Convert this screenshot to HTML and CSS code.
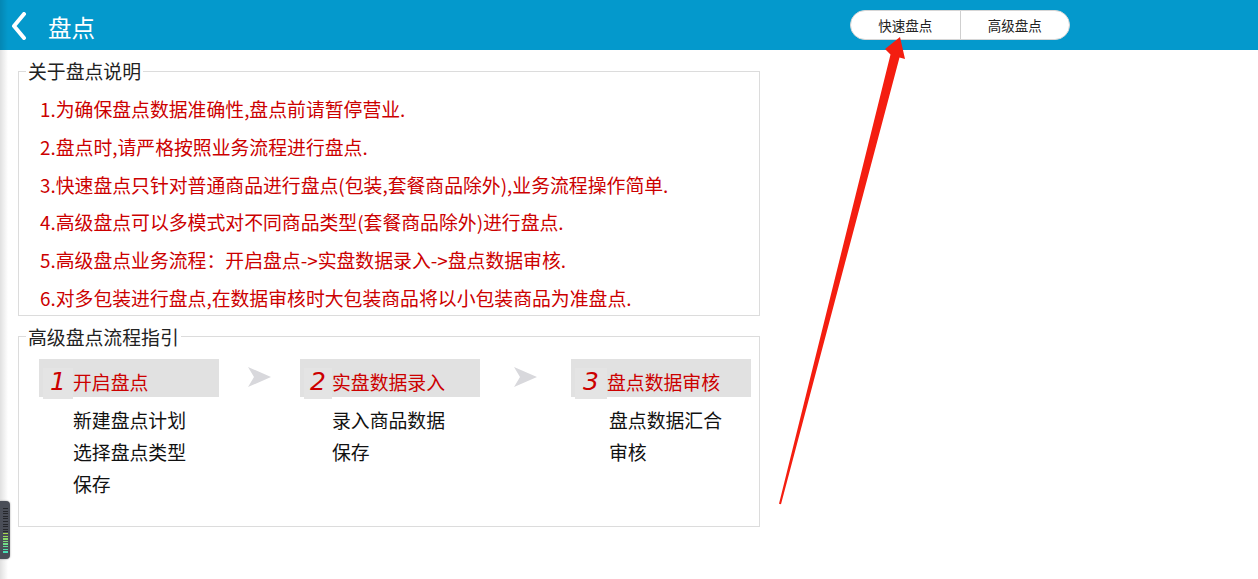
FILE: index.html
```html
<!DOCTYPE html>
<html lang="zh-CN">
<head>
<meta charset="utf-8">
<title>盘点</title>
<link rel="stylesheet" href="styles.css">
</head>
<body>
<header class="topbar">
  <svg class="back" viewBox="0 0 18 28" width="18" height="28"><path d="M14 2 L4 14 L14 26" fill="none" stroke="#fff" stroke-width="4" stroke-linecap="round" stroke-linejoin="round"/></svg>
  <div class="title">盘点</div>
  <div class="seg">
    <div class="seg-btn">快速盘点</div>
    <div class="seg-btn">高级盘点</div>
  </div>
</header>
<main class="content">
  <fieldset class="panel">
    <legend>关于盘点说明</legend>
    <div class="notes">
      <p>1.为确保盘点数据准确性,盘点前请暂停营业.</p>
      <p>2.盘点时,请严格按照业务流程进行盘点.</p>
      <p>3.快速盘点只针对普通商品进行盘点(包装,套餐商品除外),业务流程操作简单.</p>
      <p>4.高级盘点可以多模式对不同商品类型(套餐商品除外)进行盘点.</p>
      <p>5.高级盘点业务流程：开启盘点-&gt;实盘数据录入-&gt;盘点数据审核.</p>
      <p>6.对多包装进行盘点,在数据审核时大包装商品将以小包装商品为准盘点.</p>
    </div>
  </fieldset>
  <fieldset class="panel panel-flow">
    <legend>高级盘点流程指引</legend>
    <div class="flow">
      <div class="step step-1">
        <div class="step-head"><span class="num">1</span><span class="step-title">开启盘点</span></div>
        <div class="sub"><div>新建盘点计划</div><div>选择盘点类型</div><div>保存</div></div>
      </div>
      <div class="flow-arrow"><svg viewBox="0 0 23 20" width="23" height="20"><path d="M0 0 L23 10 L0 20 L6 10 Z" fill="#d8d8dc"/></svg></div>
      <div class="step step-2">
        <div class="step-head"><span class="num">2</span><span class="step-title">实盘数据录入</span></div>
        <div class="sub"><div>录入商品数据</div><div>保存</div></div>
      </div>
      <div class="flow-arrow"><svg viewBox="0 0 23 20" width="23" height="20"><path d="M0 0 L23 10 L0 20 L6 10 Z" fill="#d8d8dc"/></svg></div>
      <div class="step step-3">
        <div class="step-head"><span class="num">3</span><span class="step-title">盘点数据审核</span></div>
        <div class="sub"><div>盘点数据汇合</div><div>审核</div></div>
      </div>
    </div>
  </fieldset>
</main>
<div class="edge-shade"></div>
<div class="side-widget"><span class="bars-dark"></span><span class="bars-green"></span></div>
<svg class="annot" viewBox="0 0 1258 579" width="1258" height="579">
  <polygon points="779,503.8 781,504.2 899.5,57.5 905,59 900,37 885,49 890.5,54.5" fill="#f41e10"/>
</svg>
</body>
</html>
```

FILE: styles.css
```css
body {
  margin: 0;
  width: 1258px;
  height: 579px;
  overflow: hidden;
  position: relative;
  background: #fff;
  font-family: "Noto Sans CJK SC", "Microsoft YaHei", sans-serif;
}

.topbar {
  height: 50px;
  background: #0499cc;
  display: flex;
  align-items: center;
}

.back {
  margin-left: 10px;
  margin-top: 2px;
  flex: none;
}

.title {
  margin-left: 20px;
  margin-top: 4px;
  color: #fff;
  font-size: 23.5px;
  line-height: 30px;
}

.seg {
  margin-left: auto;
  margin-right: 188px;
  display: flex;
  height: 30px;
  width: 220px;
  box-sizing: border-box;
  background: #fff;
  border: 1px solid #d6d6d6;
  border-radius: 15px;
  overflow: hidden;
}

.seg-btn {
  flex: 1;
  display: flex;
  align-items: center;
  justify-content: center;
  font-size: 13.5px;
  color: #222;
}

.seg-btn + .seg-btn {
  border-left: 1px solid #cfcfcf;
}

.content {
  padding: 10px 0 0 18px;
}

.panel {
  margin: 0;
  width: 742px;
  box-sizing: border-box;
  border: 1px solid #dcdcdc;
  padding: 11px 8px 1px 7px;
}

.panel legend {
  padding: 0 2px;
  font-size: 18.85px;
  line-height: 22px;
  color: #222;
}

.notes {
  display: flex;
  flex-direction: column;
  gap: 5.8px;
  padding-left: 14px;
}

.notes p {
  margin: 0;
  font-size: 18.85px;
  line-height: 32px;
  color: #cc0000;
  white-space: nowrap;
}

.panel-flow {
  margin-top: 10px;
  padding-top: 11px;
  padding-bottom: 26px;
}

.flow {
  display: grid;
  grid-template-columns: 180px 81px 180px 91px 180px;
  padding-left: 13px;
}

.step-head {
  height: 38px;
  box-sizing: border-box;
  background: #e1e1e1;
  display: flex;
  align-items: flex-start;
  padding-top: 9px;
}

.num {
  display: block;
  width: 30px;
  height: 31px;
  margin-left: 4px;
  background: #e4e4e4;
  font-family: "DejaVu Sans", sans-serif;
  font-style: italic;
  font-size: 25px;
  line-height: 28px;
  color: #cc0000;
  text-align: center;
}

.step-2 .num { width: 28px; }
.step-3 .num { width: 32px; }

.step-title {
  font-size: 18.85px;
  line-height: 28px;
  color: #cc0000;
  white-space: nowrap;
}

.sub {
  margin-top: 8px;
  padding-left: 34px;
}

.step-2 .sub { padding-left: 32px; }
.step-3 .sub { padding-left: 38px; }

.sub div {
  font-size: 18.85px;
  line-height: 32px;
  color: #111;
  white-space: nowrap;
}

.sub div:first-child {
  margin-top: -1px;
}

.flow-arrow {
  display: flex;
  justify-content: center;
  align-items: flex-start;
  padding-top: 8px;
}

.edge-shade {
  position: absolute;
  left: 0;
  top: 0;
  width: 8px;
  height: 579px;
  background: linear-gradient(to right, rgba(0,0,0,0.12), rgba(0,0,0,0));
  pointer-events: none;
}

.side-widget {
  position: absolute;
  left: 0;
  top: 501px;
  width: 10px;
  height: 58px;
  background: #4a4e57;
  border-radius: 0 4px 4px 0;
  box-shadow: 0 0 2px rgba(0,0,0,0.4);
}

.bars-dark {
  position: absolute;
  left: 3px;
  top: 7px;
  width: 5px;
  height: 24px;
  background: repeating-linear-gradient(to bottom, #25272b 0, #25272b 1px, transparent 1px, transparent 2.6px);
}

.bars-green {
  position: absolute;
  left: 3px;
  top: 32px;
  width: 5px;
  height: 21px;
  background:
    repeating-linear-gradient(to bottom, transparent 0, transparent 1.4px, #4a4e57 1.4px, #4a4e57 2.6px),
    linear-gradient(to bottom, #a8d84a, #3fe0c0);
}

.annot {
  position: absolute;
  left: 0;
  top: 0;
  pointer-events: none;
}
```
